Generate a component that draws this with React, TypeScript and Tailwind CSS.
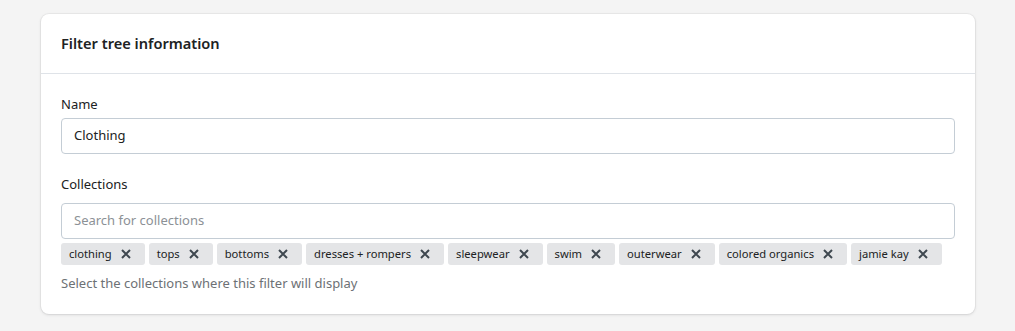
const tags = [
  "clothing",
  "tops",
  "bottoms",
  "dresses + rompers",
  "sleepwear",
  "swim",
  "outerwear",
  "colored organics",
  "jamie kay",
];

function CloseIcon() {
  return (
    <svg width="10" height="10" viewBox="0 0 10 10" fill="none" stroke="#3f4850" strokeWidth="2">
      <path d="M1 1l8 8M9 1l-8 8" />
    </svg>
  );
}

export default function App() {
  return (
    <div
      className="min-h-[331px] w-full bg-[#f4f4f4] px-[41px] pt-[14px] pb-4"
      style={{ fontFamily: '"Noto Sans", "Open Sans", sans-serif' }}
    >
      <div className="w-[934px] bg-white rounded-lg shadow-[0_0_0_1px_rgba(63,63,68,0.05),0_1px_3px_0_rgba(63,63,68,0.15)]">

        {/* HEADER */}

        <div className="h-[60px] flex items-center px-5 border-b border-[#dfe3e8]">
          <h2 className="text-[14.6px] font-semibold text-[#202223]">
            Filter tree information
          </h2>
        </div>

        <div className="px-5 pt-5 pb-[21px]">

          {/* NAME */}

          <label className="block text-[13px] text-[#202223] leading-5 mb-1">
            Name
          </label>
          <div className="h-9 flex items-center px-3 border border-[#c4cdd5] rounded-[4px] text-[13px] text-[#202223]">
            Clothing
          </div>

          {/* COLLECTIONS */}

          <label className="block text-[13px] text-[#202223] leading-5 mt-5 mb-[9px]">
            Collections
          </label>
          <div className="h-9 flex items-center px-3 border border-[#c4cdd5] rounded-[4px] text-[13px] text-[#8c9196]">
            Search for collections
          </div>

          <div className="flex flex-wrap gap-1 mt-1">
            {tags.map((tag) => (
              <span
                key={tag}
                className="h-[22px] flex items-center gap-[9px] pl-2 pr-[14px] bg-[#e4e5e7] rounded-[3px] text-[11.2px] text-[#202223]"
              >
                {tag}
                <CloseIcon />
              </span>
            ))}
          </div>

          <p className="text-[13px] text-[#6d7175] mt-2 leading-5">
            Select the collections where this filter will display
          </p>

        </div>

      </div>
    </div>
  );
}
